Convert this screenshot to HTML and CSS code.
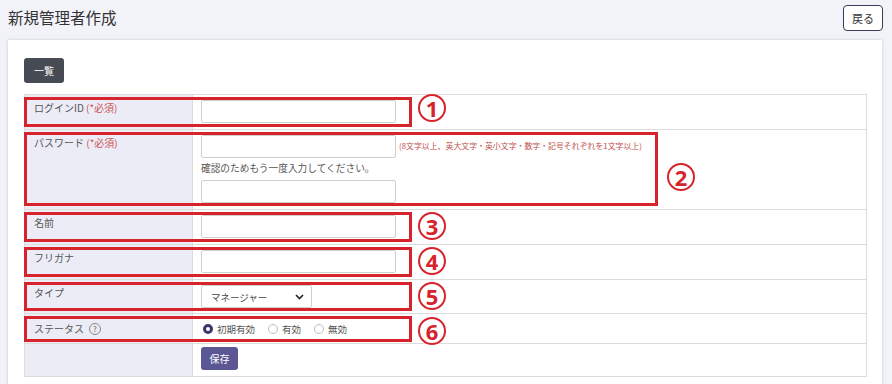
FILE: index.html
```html
<!DOCTYPE html>
<html lang="ja">
<head>
<meta charset="utf-8">
<title>新規管理者作成</title>
<link rel="stylesheet" href="styles.css">
</head>
<body>
<header class="page-head">
  <h1 class="page-title">新規管理者作成</h1>
  <button class="btn-back" type="button">戻る</button>
</header>
<main class="card">
  <button class="btn-list" type="button">一覧</button>
  <div class="form-table">
    <div class="row">
      <div class="label">ログインID <span class="req">(*必須)</span></div>
      <div class="field"><input class="text-input" type="text"></div>
      <div class="mark"><span class="num num-1">1</span></div>
    </div>
    <div class="row">
      <div class="label">パスワード <span class="req">(*必須)</span></div>
      <div class="field">
        <div class="pw-line"><input class="text-input" type="password"><span class="note">(8文字以上、英大文字・英小文字・数字・記号それぞれを1文字以上)</span></div>
        <p class="confirm">確認のためもう一度入力してください。</p>
        <input class="text-input" type="password">
      </div>
      <div class="mark mark-wide"><span class="num num-2">2</span></div>
    </div>
    <div class="row">
      <div class="label">名前</div>
      <div class="field"><input class="text-input" type="text"></div>
      <div class="mark"><span class="num num-mid">3</span></div>
    </div>
    <div class="row">
      <div class="label">フリガナ</div>
      <div class="field"><input class="text-input" type="text"></div>
      <div class="mark"><span class="num num-mid">4</span></div>
    </div>
    <div class="row">
      <div class="label">タイプ</div>
      <div class="field field-select">
        <div class="select-box">
          <select class="select"><option>マネージャー</option></select>
          <svg class="chevron" width="9" height="6" viewBox="0 0 9 6"><path d="M1 1l3.5 3.5L8 1" fill="none" stroke="#222" stroke-width="1.6"/></svg>
        </div>
      </div>
      <div class="mark"><span class="num num-mid">5</span></div>
    </div>
    <div class="row">
      <div class="label label-status">ステータス <span class="help">?</span></div>
      <div class="field field-radio">
        <label class="radio"><span class="dot dot-on"></span>初期有効</label>
        <label class="radio"><span class="dot"></span>有効</label>
        <label class="radio"><span class="dot"></span>無効</label>
      </div>
      <div class="mark mark-short"><span class="num num-6">6</span></div>
    </div>
    <div class="row">
      <div class="label"></div>
      <div class="field field-btn"><button class="btn-save" type="button">保存</button></div>
    </div>
  </div>
</main>
</body>
</html>
```
FILE: styles.css
```css
* { box-sizing: border-box; }
html, body { margin: 0; padding: 0; }
body {
  background: #f2f2f9;
  font-family: "Noto Sans CJK JP", "Noto Sans", sans-serif;
  color: #444;
  font-size: 10px;
}
.page-head {
  display: flex;
  justify-content: space-between;
  align-items: flex-start;
  height: 40px;
  padding: 5px 9px 0 8px;
}
.page-title {
  margin: 1px 0 0;
  font-size: 15.5px;
  line-height: 22px;
  font-weight: normal;
  color: #333;
}
.btn-back {
  width: 40px;
  height: 26px;
  padding: 0;
  border: 1px solid #3b3b55;
  border-radius: 4px;
  background: #fff;
  font-family: inherit;
  font-size: 11px;
  color: #333;
}
.card {
  margin: 0 10px 0 8px;
  background: #fff;
  box-shadow: 0 0 3px rgba(0, 0, 0, 0.18);
  padding: 18px 15px 20px 16px;
}
.btn-list {
  display: block;
  width: 40px;
  height: 25px;
  padding: 0;
  border: 0;
  border-radius: 3px;
  background: #474c54;
  color: #fff;
  font-family: inherit;
  font-size: 10px;
}
.form-table {
  margin-top: 11px;
  border: 1px solid #dcdcdc;
  border-bottom: 0;
}
.row {
  position: relative;
  display: grid;
  grid-template-columns: 168px 1fr;
  border-bottom: 1px solid #dcdcdc;
}
.label {
  background: #ececf7;
  border-right: 1px solid #dcdcdc;
  padding: 6px 9px;
  line-height: 14px;
  font-size: 10px;
  color: #555;
}
.req { color: #cc5555; }
.field {
  padding: 5px 8px 6px;
  line-height: 14px;
}
.text-input {
  display: block;
  width: 195px;
  height: 23px;
  margin: 0;
  border: 1px solid #cfcfcf;
  border-radius: 2px;
  background: #fff;
}
.pw-line {
  display: flex;
  align-items: flex-start;
  gap: 3px;
}
.note {
  margin-top: 5px;
  font-size: 7.9px;
  line-height: 12px;
  color: #c0504d;
  white-space: nowrap;
}
.confirm {
  margin: 0;
  height: 22px;
  line-height: 21px;
  font-size: 9.7px;
  color: #555;
}
.field-select { padding-bottom: 5px; }
.select-box {
  position: relative;
  width: 111px;
  height: 23px;
}
.select {
  appearance: none;
  -webkit-appearance: none;
  width: 100%;
  height: 100%;
  margin: 0;
  padding: 0 0 0 9px;
  border: 1px solid #cfcfcf;
  border-radius: 2px;
  background: #fff;
  font-family: inherit;
  font-size: 9.5px;
  color: #444;
}
.chevron {
  position: absolute;
  right: 8px;
  top: 9px;
  pointer-events: none;
}
.label-status { display: flex; align-items: center; gap: 5px; }
.help {
  display: inline-flex;
  align-items: center;
  justify-content: center;
  width: 12px;
  height: 12px;
  border: 1px solid #888;
  border-radius: 50%;
  font-size: 8px;
  line-height: 1;
  color: #666;
}
.field-radio {
  display: flex;
  align-items: center;
  gap: 13px;
  padding: 6px 10px 6px;
  height: 29px;
}
.radio {
  display: flex;
  align-items: center;
  gap: 4px;
  font-size: 9.5px;
  color: #555;
}
.dot {
  width: 10px;
  height: 10px;
  border: 1px solid #bdbdbd;
  border-radius: 50%;
  background: #fff;
}
.dot-on { border: 3px solid #3a386a; }
.field-btn { padding: 3px 8px 6px; }
.btn-save {
  display: block;
  width: 37px;
  height: 23px;
  padding: 0;
  border: 0;
  border-radius: 3px;
  background: #5b5794;
  color: #fff;
  font-family: inherit;
  font-size: 10px;
}
.mark {
  position: absolute;
  left: -1px;
  top: 2px;
  bottom: 2px;
  width: 388px;
  border: 3px solid #d7232c;
}
.mark-wide { width: 634px; bottom: 3px; }
.mark-short { top: 2px; bottom: 1px; }
.num {
  position: absolute;
  left: calc(100% + 9px);
  top: 50%;
  transform: translateY(-50%);
  width: 28px;
  height: 28px;
  border: 2.5px solid #d7232c;
  border-radius: 50%;
  display: flex;
  align-items: center;
  justify-content: center;
  font-family: "Noto Sans", sans-serif;
  font-weight: bold;
  font-size: 22px;
  line-height: 1;
  color: #d7232c;
}
.num-1 { margin-top: -4px; }
.num-mid { margin-top: -1px; }
.num-2 { margin-top: 8px; left: calc(100% + 12px); }
.num-6 { margin-top: 2px; }
```
